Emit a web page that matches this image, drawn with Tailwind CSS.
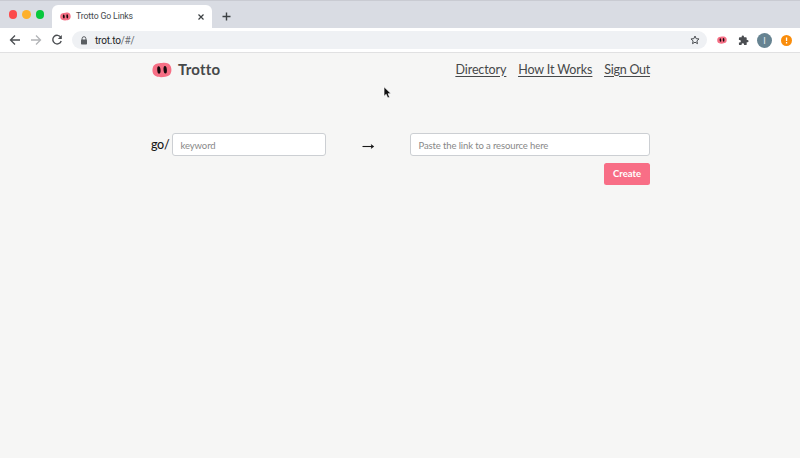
<!DOCTYPE html>
<html lang="en"><head><meta charset="utf-8"><title>Trotto Go Links</title>
<script src="https://cdn.jsdelivr.net/npm/@tailwindcss/browser@4"></script></head>
<body class="h-[458px] w-[800px] overflow-hidden bg-[#f6f6f5] font-['Lato',sans-serif]">
<svg class="hidden"><symbol id="snout" viewBox="0 0 20 16"><path d="M1 5C2.500 1.600 6 1.300 10 1c4-.5 7.500.2 8.900 3.700 1.200 4 .2 7.500-2 8.900-3.500 1.900-10 2.300-13.300.5C.4 12.600-.2 8.500 1 5Z" fill="#f66f85"/><ellipse cx="6.900" cy="8" rx="1.650" ry="3.700" fill="#16090c" transform="rotate(-5 6.900 8)"/><ellipse cx="13.200" cy="7.800" rx="1.650" ry="3.700" fill="#16090c" transform="rotate(-5 13.200 7.800)"/></symbol></svg>
<header class="font-['Roboto',sans-serif]">
<div class="flex h-7 items-end border-t border-[#c9cbd2] bg-[#d9dce3]">
<div class="flex h-full w-[52px] items-center gap-[5px] pl-[8.500px]"><i class="size-[8.500px] rounded-full bg-[#fc4b4c]"></i><i class="size-[8.500px] rounded-full bg-[#fdb02b]"></i><i class="size-[8.500px] rounded-full bg-[#08c83c]"></i></div>
<div class="flex h-[23px] w-[160px] items-center rounded-t-[6px] bg-white pl-2 pr-[7px]"><svg class="h-[9px] w-[11px]"><use href="#snout"/></svg><span class="ml-[5px] flex-1 text-[8.700px] tracking-[-.13px] text-[#45494d]">Trotto Go Links</span><svg class="size-2" viewBox="0 0 8 8" stroke="#3c4043" stroke-width="1.200"><path d="m1.500 1.500 5 5m0-5-5 5"/></svg></div>
<div class="flex h-[23px] items-center pl-[10px]"><svg class="size-[9px]" viewBox="0 0 9 9" stroke="#3c4043" stroke-width="1.400"><path d="M4.500.5v8m-4-4h8"/></svg></div>
</div>
<div class="flex h-[25px] items-center border-b border-[#e1e1e2] bg-white pl-[9px]">
<svg class="size-3" viewBox="0 0 12 12" fill="none" stroke="#4b4e52" stroke-width="1.300"><path d="M11 6H1.500M6 1.500 1.500 6 6 10.500"/></svg>
<svg class="ml-[9px] size-3" viewBox="0 0 12 12" fill="none" stroke="#b2b4b7" stroke-width="1.300"><path d="M1 6h9.500M6 1.500 10.500 6 6 10.500"/></svg>
<svg class="ml-[9px] size-3" viewBox="0 0 12 12" fill="none" stroke="#4b4e52" stroke-width="1.400"><path d="M9.800 3.400A4.300 4.300 0 1 0 10.200 7"/><path d="M10.800 1v4h-4Z" fill="#4b4e52" stroke="none"/></svg>
<div class="ml-[9px] flex h-[18px] w-[635px] items-center rounded-full bg-[#eff1f4] pl-[8px] pr-[7px]">
<svg class="h-[9px] w-[8px]" viewBox="0 0 8 9"><path d="M2.100 4V2.600a1.900 1.900 0 0 1 3.800 0V4" fill="none" stroke="#5a5e62"/><rect x="1" y="3.500" width="6" height="5" rx=".7" fill="#5a5e62"/></svg>
<span class="ml-[7px] flex-1 text-[10px] tracking-[-.2px] text-[#202124]">trot.to<span class="text-[#6a6e72]">/#/</span></span>
<svg class="size-[10px]" viewBox="0 0 24 24" fill="none" stroke="#4b4e52" stroke-width="2.400"><path d="m12 2.500 2.800 6.300 6.900.7-5.200 4.600 1.500 6.700-6-3.500-6 3.500 1.500-6.700-5.200-4.600 6.900-.7Z"/></svg></div>
<svg class="ml-[9.500px] h-[8px] w-[10px]"><use href="#snout"/></svg>
<svg class="ml-[11px] size-[11px]" viewBox="0 0 24 24" fill="#4b4e52"><path d="M20.500 11H19V7a2 2 0 0 0-2-2h-4V3.500a2.500 2.500 0 0 0-5 0V5H4a2 2 0 0 0-2 2v3.800h1.500a2.700 2.700 0 0 1 0 5.400H2V20a2 2 0 0 0 2 2h3.800v-1.500a2.700 2.700 0 0 1 5.400 0V22H17a2 2 0 0 0 2-2v-4h1.500a2.500 2.500 0 0 0 0-5Z"/></svg>
<span class="ml-[8.500px] flex size-[15px] items-center justify-center rounded-full bg-[#668391] pt-[2px] text-[9px] leading-none text-[#e3eaee]">I</span>
<span class="ml-[8.500px] flex size-[11px] items-center justify-center rounded-full bg-[#fa8d0b]"><svg class="h-[7px] w-[3px]" viewBox="0 0 3 7" fill="#fff"><path d="M.9.5h1.300v3.500H.9Zm0 4.600h1.300v1.300H.9Z"/></svg></span>
</div></header>
<main class="ml-[151px] w-[499px]">
<div class="flex h-[34px] items-center text-[#464849]"><svg class="ml-px h-4 w-5"><use href="#snout"/></svg><span class="ml-[6px] pb-[2px] text-[15px] font-bold tracking-[.2px]">Trotto</span>
<nav class="ml-auto flex gap-3 text-[12.500px] tracking-[-.13px] underline underline-offset-[1.500px]"><a>Directory</a><a>How It Works</a><a class="tracking-[-.25px]">Sign Out</a></nav></div>
<div class="mt-[46px] flex h-[23px] items-center">
<span class="w-[21px] pt-[2px] text-[12.500px] font-medium tracking-[-.3px] text-[#191919]">go/</span><div class="flex h-[23px] w-[154px] items-center rounded-[3px] border border-[#cccfd3] bg-white pl-[7.500px] pt-[3px] text-[9.500px] tracking-[-.1px] text-[#888]">keyword</div>
<svg class="ml-[36px] mt-[3px] h-[9px] w-[13px]" viewBox="0 0 13 9"><path d="M.5 4.500H10" stroke="#191919" stroke-width="1.100"/><path d="m8.800 1.900 3.400 2.600-3.400 2.600.6-2.600Z" fill="#191919"/></svg>
<div class="ml-auto flex h-[23px] w-[240px] items-center rounded-[3px] border border-[#cccfd3] bg-white pl-[7.500px] pt-[3px] text-[9.500px] tracking-[-.12px] text-[#888]">Paste the link to a resource here</div></div>
<div class="mt-[7px] flex justify-end"><button class="h-[22px] w-[46px] rounded-[2.500px] bg-[#f86e86] text-[9.500px] font-bold text-white">Create</button></div>
</main>
<svg class="absolute left-[383px] top-[86px] h-[13px] w-[9px]" viewBox="0 0 9 13"><path d="M1 .8v9.500l2.200-2 1.500 3.700 1.900-.8-1.500-3.500h3Z" fill="#111" stroke="#fff" stroke-width=".7"/></svg>
</body></html>
